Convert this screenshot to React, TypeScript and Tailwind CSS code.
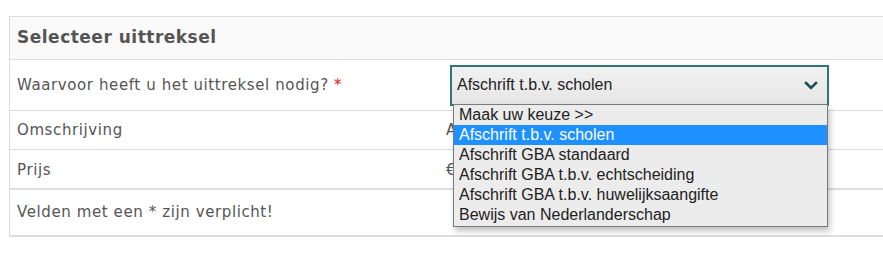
const options = [
  'Maak uw keuze >>',
  'Afschrift t.b.v. scholen',
  'Afschrift GBA standaard',
  'Afschrift GBA t.b.v. echtscheiding',
  'Afschrift GBA t.b.v. huwelijksaangifte',
  'Bewijs van Nederlanderschap',
];

export default function App() {
  const selected = 1;

  return (
    <div className="w-[883px] h-[257px] overflow-hidden bg-white pt-[16px] pl-[9px]">
      <div className="w-[890px] border-l border-t border-[#dddddd] text-[#555555] font-['DejaVu_Sans',sans-serif]">
        {/* header */}
        <div className="h-[43px] bg-[#fafafa] border-b border-[#dddddd] flex items-center pl-[7px]">
          <h2 className="text-[17px] font-bold tracking-[0.5px]">Selecteer uittreksel</h2>
        </div>

        {/* row: select */}
        <div className="h-[51px] border-b border-[#dddddd] flex items-center">
          <div className="w-[436px] pl-[7px] text-[15px] tracking-[0.6px]">
            Waarvoor heeft u het uittreksel nodig? <span className="text-[#e0202a]">*</span>
          </div>
          <div className="relative pl-[4px]">
            <div className="w-[379px] h-[41px] border-2 border-[#2f7777] bg-gradient-to-b from-[#f1f1f1] to-[#e6e6e6] flex items-center justify-between pl-[5px] pr-[9px] font-['Liberation_Sans',Arial,sans-serif] text-[16px] text-[#222222]">
              <span>Afschrift t.b.v. scholen</span>
              <svg width="14" height="9" viewBox="0 0 14 9" fill="none">
                <path d="M2 2l5 5 5-5" stroke="#1d4d57" strokeWidth="2.6" strokeLinecap="square" />
              </svg>
            </div>
            {/* open list */}
            <div className="absolute left-[7px] top-[39px] w-[375px] bg-[#ececec] border border-[#7a7a7a] shadow-[2px_4px_6px_rgba(0,0,0,0.25)] font-['Liberation_Sans',Arial,sans-serif] text-[16px] leading-[20px] text-[#222222] z-10">
              {options.map((o, i) => (
                <div
                  key={o}
                  className={i === selected ? 'h-[20px] px-[5px] bg-[#1e90ff] text-white' : 'h-[20px] px-[5px]'}
                >
                  {o}
                </div>
              ))}
              <div className="h-[1px]" />
            </div>
          </div>
        </div>

        {/* row: omschrijving */}
        <div className="h-[39px] border-b border-[#dddddd] flex items-center text-[15px] tracking-[0.6px]">
          <div className="w-[436px] pl-[7px]">Omschrijving</div>
          <div>Afschrift t.b.v. scholen</div>
        </div>

        {/* row: prijs */}
        <div className="h-[40px] border-b-2 border-[#dddddd] flex items-center pt-[3px] text-[15px] tracking-[0.6px]">
          <div className="w-[436px] pl-[7px]">Prijs</div>
          <div>€ 0,00</div>
        </div>

        {/* footer */}
        <div className="h-[47px] border-b-2 border-[#dddddd] flex items-center pl-[7px] text-[15px] tracking-[0.6px]">
          Velden met een * zijn verplicht!
        </div>
      </div>
    </div>
  );
}
